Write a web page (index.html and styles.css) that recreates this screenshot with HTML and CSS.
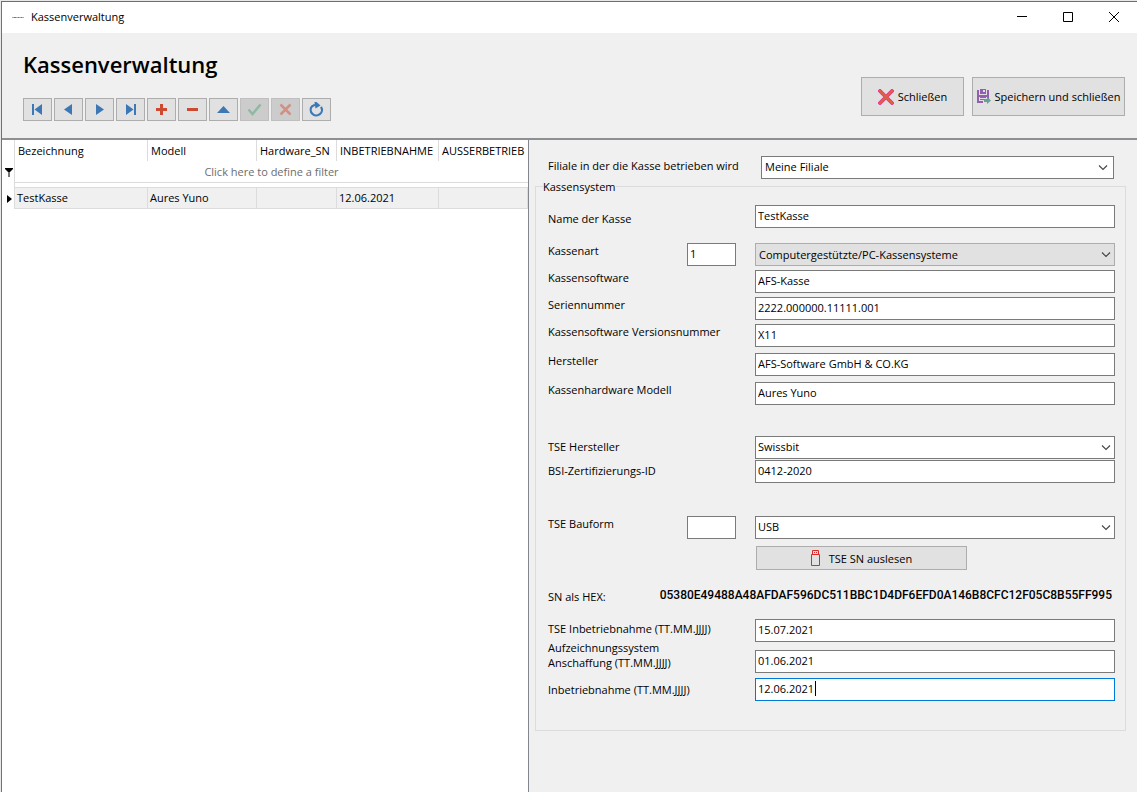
FILE: index.html
```html
<!DOCTYPE html>
<html lang="de">
<head>
<meta charset="utf-8">
<meta name="viewport" content="width=device-width, initial-scale=1">
<title>Kassenverwaltung</title>
<link rel="stylesheet" href="styles.css">
</head>
<body>
<div class="desktop">
<div class="window">
  <header class="titlebar">
    <svg class="app-icon" width="12" height="3" viewBox="0 0 12 3"><path d="M0 1.5h12" stroke="#a8a8a8" stroke-width="1"/><path d="M2 1.5h2M6 1.5h1M9 1.5h1" stroke="#777"/></svg>
    <span class="titlebar-text">Kassenverwaltung</span>
    <div class="window-controls">
      <button type="button" aria-label="Minimieren"><svg width="10" height="10" viewBox="0 0 10 10"><path d="M0 4.5h10" stroke="#000"/></svg></button>
      <button type="button" aria-label="Maximieren"><svg width="10" height="10" viewBox="0 0 10 10"><path d="M.5.5h9v9h-9z" stroke="#000" fill="none"/></svg></button>
      <button type="button" aria-label="Fenster schließen"><svg width="10" height="10" viewBox="0 0 10 10"><path d="M0 0l10 10M10 0L0 10" stroke="#000"/></svg></button>
    </div>
  </header>

  <div class="toolbar">
    <div class="toolbar-main">
      <h1>Kassenverwaltung</h1>
      <div class="navigator">
        <button type="button" aria-label="Erster"><svg width="17" height="17" viewBox="0 0 17 17" fill="#3b78b5"><path d="M3 3h2v11H3zM13 3v11L5.500 8.500z"/></svg></button>
        <button type="button" aria-label="Zurück"><svg width="17" height="17" viewBox="0 0 17 17" fill="#3b78b5"><path d="M12 3v11L4 8.500z"/></svg></button>
        <button type="button" aria-label="Weiter"><svg width="17" height="17" viewBox="0 0 17 17" fill="#3b78b5"><path d="M5 3v11l8-5.500z"/></svg></button>
        <button type="button" aria-label="Letzter"><svg width="17" height="17" viewBox="0 0 17 17" fill="#3b78b5"><path d="M4 3v11l7.500-5.500zM12 3h2v11h-2z"/></svg></button>
        <button type="button" aria-label="Einfügen"><svg width="17" height="17" viewBox="0 0 17 17" fill="#cc4a2f"><path d="M7 3h3v4h4v3h-4v4H7v-4H3V7h4z"/></svg></button>
        <button type="button" aria-label="Löschen"><svg width="17" height="17" viewBox="0 0 17 17" fill="#cc4a2f"><path d="M3 7h11v3H3z"/></svg></button>
        <button type="button" aria-label="Bearbeiten"><svg width="17" height="17" viewBox="0 0 17 17" fill="#3b78b5"><path d="M2 12h13L8.500 5z"/></svg></button>
        <button type="button" disabled aria-label="Übernehmen"><svg width="17" height="17" viewBox="0 0 17 17" fill="none" stroke="#8fb9a4" stroke-width="2.500"><path d="M2.500 8.500l4 4.500L14.500 3.500"/></svg></button>
        <button type="button" disabled aria-label="Abbrechen"><svg width="17" height="17" viewBox="0 0 17 17" fill="none" stroke="#d38f80" stroke-width="2.500"><path d="M3.500 3.500l10 10M13.500 3.500l-10 10"/></svg></button>
        <button type="button" aria-label="Aktualisieren"><svg width="17" height="17" viewBox="0 0 17 17"><path d="M13 5.800A5.600 5.600 0 1 1 4 5.300L7 3.800" fill="none" stroke="#3b78b5" stroke-width="2.200"/><path d="M6.500 1h2l4 3.500-5 3z" fill="#3b78b5"/></svg></button>
      </div>
    </div>
    <div class="actions">
      <button type="button" class="action">
        <svg width="16" height="16" viewBox="0 0 16 16" stroke-linecap="round"><path d="M2 2l12 12M14 2L2 14" stroke="#f0219a" stroke-width="3.800"/><path d="M2 2l12 12M14 2L2 14" stroke="#dc6048" stroke-width="2.600"/></svg>
        <span>Schließen</span>
      </button>
      <button type="button" class="action action-save">
        <svg width="14" height="15" viewBox="0 0 14 15"><path d="M0 1h2v5h8V1h2v7H2v4h4v2H0z" fill="#935fb0"/><path d="M3 0h6v5H3z" fill="#935fb0"/><path d="M6 1h2v2H6z" fill="#e1e1e1"/><path d="M2 8h8v6H2z" fill="#e1e1e1"/><path d="M0 12h6v2H0zM10 7h2v3h-2zM3 8h6v1H3zM3 10h5v1H3z" fill="#935fb0"/><path d="M7 10h3V8l4 3.500-4 3.500v-2H7z" fill="#68a092"/></svg>
        <span>Speichern und schließen</span>
      </button>
    </div>
  </div>

  <main class="content">
    <section class="grid-pane">
      <table>
        <colgroup><col class="c-mark"><col class="c-name"><col class="c-model"><col class="c-sn"><col class="c-start"><col class="c-end"></colgroup>
        <thead>
          <tr class="head"><td></td><th>Bezeichnung</th><th>Modell</th><th>Hardware_SN</th><th>INBETRIEBNAHME</th><th>AUSSERBETRIEB</th></tr>
          <tr class="filter"><td><svg width="8" height="9" viewBox="0 0 8 9"><path d="M0 0h8v1L5 4H3L0 1z"/><path d="M3 4h2v5H3z" fill="#777"/></svg></td><td colspan="5">Click here to define a filter</td></tr>
          <tr class="spacer"><td></td><td colspan="5"></td></tr>
        </thead>
        <tbody>
          <tr class="record"><td><svg width="5" height="8" viewBox="0 0 5 8"><path d="M0 0l5 4-5 4z"/></svg></td><td>TestKasse</td><td>Aures Yuno</td><td></td><td>12.06.2021</td><td></td></tr>
        </tbody>
      </table>
    </section>

    <form class="form-pane">
      <div class="branch">
        <label for="branch">Filiale in der die Kasse betrieben wird</label>
        <select id="branch"><option>Meine Filiale</option></select>
      </div>
      <fieldset>
        <legend>Kassensystem</legend>
        <div class="row row-name"><label for="name">Name der Kasse</label><input id="name" value="TestKasse"></div>

        <div class="group group-register">
          <div class="row row-code"><label for="kind">Kassenart</label><input class="code" aria-label="Kassenart Nummer" value="1"><select id="kind" class="gray"><option>Computergestützte/PC-Kassensysteme</option></select></div>
          <div class="row"><label for="software">Kassensoftware</label><input id="software" value="AFS-Kasse"></div>
          <div class="row"><label for="serial">Seriennummer</label><input id="serial" value="2222.000000.11111.001"></div>
          <div class="row"><label for="version">Kassensoftware Versionsnummer</label><input id="version" value="X11"></div>
        </div>
        <div class="group group-hardware">
          <div class="row"><label for="maker">Hersteller</label><input id="maker" value="AFS-Software GmbH &amp; CO.KG"></div>
          <div class="row"><label for="model">Kassenhardware Modell</label><input id="model" value="Aures Yuno"></div>
        </div>

        <div class="group group-tse">
          <div class="row"><label for="tse">TSE Hersteller</label><select id="tse"><option>Swissbit</option></select></div>
          <div class="row"><label for="bsi">BSI-Zertifizierungs-ID</label><input id="bsi" value="0412-2020"></div>
        </div>

        <div class="group group-form">
          <div class="row row-code"><label for="form">TSE Bauform</label><input class="code" aria-label="TSE Bauform Nummer" value=""><select id="form"><option>USB</option></select></div>
          <div class="row"><span></span><button type="button" class="read">
            <svg width="9" height="16" viewBox="0 0 9 16" fill="none" stroke="#d92b2b"><path d="M.5 4.500h8v11h-8zM1.500 4.500v-4h6v4"/><path d="M3 2.500h1M5 2.500h1"/></svg>
            <span>TSE SN auslesen</span></button></div>
        </div>

        <div class="hex"><span>SN als HEX:</span><output>05380E49488A48AFDAF596DC511BBC1D4DF6EFD0A146B8CFC12F05C8B55FF995</output></div>

        <div class="group group-dates">
          <div class="row"><label for="d1">TSE Inbetriebnahme (TT.MM.JJJJ)</label><input id="d1" value="15.07.2021"></div>
          <div class="row row-tall"><label for="d2">Aufzeichnungssystem Anschaffung (TT.MM.JJJJ)</label><input id="d2" value="01.06.2021"></div>
          <div class="row"><label for="d3">Inbetriebnahme (TT.MM.JJJJ)</label><div class="active"><input id="d3" value="12.06.2021"><i class="caret"></i></div></div>
        </div>
      </fieldset>
    </form>
  </main>
</div>
</div>
</body>
</html>
```
FILE: styles.css
```css
* { box-sizing: border-box; }

body {
  margin: 0;
  background: #f0f0f0;
  color: #000;
  font: 11px/15px "Open Sans", "Noto Sans", sans-serif;
}

button, input, select { font: inherit; color: inherit; }
button { padding: 0; }
svg { display: block; flex: none; }

.desktop {
  min-height: 100vh;
  display: flex;
  padding: 1px 0 0 1px;
  background: #e8e8e8;
}

.window {
  flex: 1;
  min-width: 0;
  display: flex;
  flex-direction: column;
  border-top: 1px solid #6e6e6e;
  border-left: 1px solid #6d7378;
  background: #f0f0f0;
}

.titlebar {
  display: flex;
  align-items: center;
  height: 31px;
  padding-left: 10px;
  gap: 7px;
  background: #fff;
}
.titlebar-text { padding-bottom: 2px; }
.window-controls { display: flex; margin-left: auto; align-self: stretch; }
.window-controls button {
  display: grid;
  place-items: center;
  width: 46px;
  padding-bottom: 2px;
  border: 0;
  background: none;
}

.toolbar {
  display: flex;
  justify-content: space-between;
  height: 107px;
  padding: 14px 12px 0 21px;
  border-bottom: 2px solid #8d8f92;
}
h1 { margin: 0; font-size: 22px; line-height: 34px; font-weight: 600; }
.navigator { display: flex; gap: 2px; margin-top: 17px; }
.navigator button {
  display: grid;
  place-items: center;
  width: 29px;
  height: 23px;
  border: 1px solid #adadad;
  background: #e1e1e1;
}
.navigator button:disabled { background: #ccc; border-color: #bfbfbf; }

.actions { display: flex; gap: 8px; margin-top: 30px; }
.action {
  display: flex;
  align-items: center;
  justify-content: center;
  gap: 4px;
  width: 103px;
  height: 39px;
  border: 1px solid #adadad;
  background: #e1e1e1;
  white-space: nowrap;
}
.action-save { width: 153px; }

.content { flex: 1; display: flex; }

.grid-pane {
  flex: 0 1 527px;
  background: #fff;
  border-right: 1px solid #82868f;
}
table { width: 100%; border-collapse: separate; border-spacing: 0; table-layout: fixed; }
.c-mark { width: 13px; }
.c-name { width: 133px; }
.c-model { width: 109px; }
.c-sn { width: 80px; }
.c-start { width: 102px; }
th, td { padding: 0 3px; font-weight: 400; text-align: left; white-space: nowrap; overflow: hidden; }
td:first-child { padding: 0 0 0 3px; border-right: 1px solid #dcdcdc; }
.head { height: 21px; }
.head th { padding-right: 0; border-right: 1px solid #dcdcdc; }
.head th:last-child { border-right: 0; }
.filter { height: 22px; }
.filter td + td { text-align: center; color: #6d6d6d; border-bottom: 1px solid #dcdcdc; }
.spacer { height: 5px; }
.spacer td + td { border-bottom: 1px solid #dcdcdc; }
.record { height: 21px; }
.record td { padding: 0 0 2px 2px; }
.record td:first-child { padding: 0 0 0 5px; }
.record td + td { background: #f0f0f0; border-right: 1px solid #dcdcdc; border-bottom: 1px solid #dcdcdc; }

.form-pane { flex: 1; min-width: 0; padding: 16px 11px 16px 6px; }

input, select {
  display: block;
  width: 100%;
  height: 23px;
  margin: 0;
  padding: 0 2px 2px;
  border: 1px solid #7a7a7a;
  border-radius: 0;
  background-color: #fff;
  outline: 0;
}
select {
  appearance: none;
  padding-right: 20px;
  background-image: url("data:image/svg+xml,%3Csvg xmlns='http://www.w3.org/2000/svg' width='10' height='6'%3E%3Cpath d='M1 .5l4 4 4-4' fill='none' stroke='%23444' stroke-width='1.100'/%3E%3C/svg%3E");
  background-repeat: no-repeat;
  background-position: right 3px center;
}
.gray { background-color: #e1e1e1; border-color: #adadad; padding-left: 3px; padding-bottom: 0; }

.branch {
  display: grid;
  grid-template-columns: 213px 1fr;
  padding: 0 12px 0 13px;
}
.branch select { padding-left: 3px; background-position: right 5px center; }
.branch label { padding-top: 2px; }

fieldset {
  min-width: 0;
  margin: 0;
  padding: 11px 10px 29px 12px;
  border: 1px solid #dcdcdc;
}
legend { margin-left: -5px; padding: 0; }

.row { display: grid; grid-template-columns: 207px 1fr; align-items: center; }
.row-name label { padding-top: 4px; }
.row-code { grid-template-columns: 139px 49px 1fr; }
.row-code select { margin-left: 19px; width: calc(100% - 19px); }
.group { display: grid; }
.group-register { margin-top: 15px; row-gap: 4px; }
.group-hardware { margin-top: 6px; row-gap: 6px; }
.group-register label, .group-hardware label, .group-form label { padding-bottom: 8px; }
.group-tse { margin-top: 31px; row-gap: 1px; }
.group-tse label { padding-bottom: 2px; }
.group-form { margin-top: 33px; row-gap: 7px; }
.group-dates { margin-top: 15px; row-gap: 6px; }
.group-dates label { padding-bottom: 4px; }
.group-dates .row:last-child label { padding-bottom: 0; }
.row-tall { height: 24px; }
.row-tall label { width: 150px; margin-top: -8px; }

.read {
  display: flex;
  align-items: center;
  justify-content: center;
  gap: 9px;
  width: 211px;
  height: 24px;
  margin-left: 1px;
  border: 1px solid #adadad;
  background: #e1e1e1;
}

.hex {
  display: flex;
  justify-content: space-between;
  align-items: flex-end;
  margin-top: 16px;
  height: 18px;
}
.hex output {
  padding: 0 3px 1px 0;
  font: 500 12px/15px Roboto, "Open Sans", sans-serif;
}

.active { position: relative; }
.active input { border-color: #0078d7; }
.caret { position: absolute; left: 60px; top: 3px; width: 1px; height: 15px; background: #000; }
```
